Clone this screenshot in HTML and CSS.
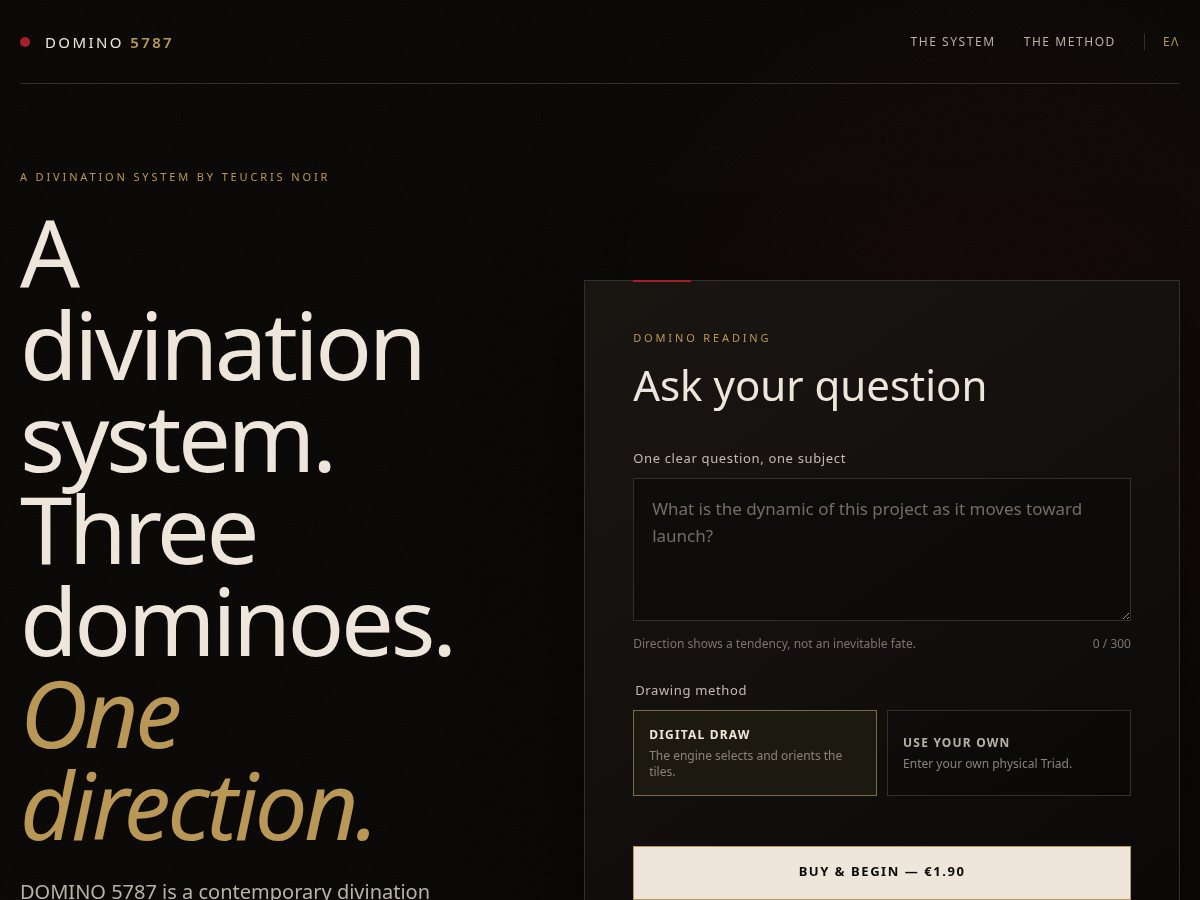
FILE: index.html
```html
<!DOCTYPE html>
<html lang="en">
<head>
  <meta charset="UTF-8" />
  <meta name="viewport" content="width=device-width, initial-scale=1.0" />
  <title>DOMINO 5787</title>
  <link rel="stylesheet" href="styles.css">
</head>
<body>
  <div class="page">
    <header class="site-header">
      <a class="brand" href="#top">
        <span class="brand-dot"></span>
        <span>DOMINO <strong>5787</strong></span>
      </a>
      <nav class="site-nav">
        <a href="#system">The System</a>
        <a href="#method">The Method</a>
        <a class="lang" href="#el" lang="el">ΕΛ</a>
      </nav>
    </header>

    <main class="hero" id="top">
      <section class="intro">
        <p class="eyebrow">A divination system by Teucris Noir</p>
        <h1>A divination system. Three dominoes. <em>One direction.</em></h1>
        <p class="lead">DOMINO 5787 is a contemporary divination</p>
      </section>

      <form class="card" id="readingForm">
        <p class="eyebrow">Domino reading</p>
        <h2>Ask your question</h2>

        <label class="field-label" for="question">One clear question, one subject</label>
        <textarea id="question" maxlength="300" placeholder="What is the dynamic of this project as it moves toward launch?"></textarea>
        <div class="field-meta">
          <span>Direction shows a tendency, not an inevitable fate.</span>
          <span id="counter">0 / 300</span>
        </div>

        <fieldset class="methods">
          <legend class="field-label">Drawing method</legend>
          <div class="method-grid">
            <button type="button" class="method" aria-pressed="true">
              <strong>Digital draw</strong>
              <span>The engine selects and orients the tiles.</span>
            </button>
            <button type="button" class="method" aria-pressed="false">
              <strong>Use your own</strong>
              <span>Enter your own physical Triad.</span>
            </button>
          </div>
        </fieldset>

        <button type="submit" class="buy">Buy &amp; begin — €1.90</button>
      </form>
    </main>
  </div>

  <script>
    const question = document.getElementById('question');
    const counter = document.getElementById('counter');
    const methods = document.querySelectorAll('.method');

    question.oninput = () => {
      counter.textContent = `${question.value.length} / 300`;
    };

    methods.forEach((button) => {
      button.onclick = () => {
        methods.forEach((m) => m.setAttribute('aria-pressed', m === button));
      };
    });

    document.getElementById('readingForm').onsubmit = (e) => e.preventDefault();
  </script>
</body>
</html>
```

FILE: styles.css
```css
:root {
  --ink: #080604;
  --paper: #eee6da;
  --muted: #b9b1a6;
  --dim: #8a837a;
  --gold: #b99857;
  --red: #a51e2d;
  --line: #32302e;
}
* {
  box-sizing: border-box;
}
body {
  margin: 0;
  min-height: 100vh;
  font-family: "Noto Sans", sans-serif;
  color: var(--paper);
  background:
    radial-gradient(circle at 83% 36%, rgba(120, 12, 28, 0.12), transparent 400px),
    var(--ink);
}
/* film grain over the background */
body::before {
  content: "";
  position: fixed;
  inset: 0;
  z-index: -1;
  opacity: 0.05;
  background: url("data:image/svg+xml,%3Csvg xmlns='http://www.w3.org/2000/svg' width='180' height='180'%3E%3Cfilter id='n'%3E%3CfeTurbulence type='fractalNoise' baseFrequency='.8' numOctaves='3' stitchTiles='stitch'/%3E%3CfeColorMatrix type='saturate' values='0'/%3E%3C/filter%3E%3Crect width='180' height='180' filter='url(%23n)'/%3E%3C/svg%3E");
}
h1, h2, p {
  margin: 0;
  font-weight: 400;
}
a {
  color: inherit;
  text-decoration: none;
}
button, textarea {
  font-family: inherit;
}
.page {
  max-width: 1280px;
  margin: 0 auto;
  padding: 0 20px;
}
.site-header {
  display: flex;
  align-items: center;
  justify-content: space-between;
  height: 84px;
  border-bottom: 1px solid var(--line);
}
.brand {
  display: flex;
  align-items: center;
  gap: 15px;
  font-size: 15px;
  line-height: 20px;
  letter-spacing: 0.16em;
}
.brand strong {
  color: var(--gold);
  font-weight: 600;
}
.brand-dot {
  width: 10px;
  height: 10px;
  border-radius: 50%;
  background: var(--red);
}
.site-nav {
  display: flex;
  align-items: center;
  gap: 28px;
  font-size: 12px;
  line-height: 17px;
  letter-spacing: 0.13em;
  text-transform: uppercase;
  color: var(--muted);
}
.lang {
  padding-left: 18px;
  border-left: 1px solid var(--line);
  color: var(--gold);
}
.hero {
  display: grid;
  grid-template-columns: 11fr 14fr;
  align-items: start;
  gap: 96px;
  padding: 84px 0 96px;
}
.eyebrow {
  font-size: 11px;
  line-height: 18px;
  letter-spacing: 0.26em;
  text-transform: uppercase;
  color: var(--gold);
}
h1 {
  margin-top: 20px;
  font-size: 94px;
  line-height: 92px;
  letter-spacing: -0.037em;
}
h1 em {
  color: var(--gold);
}
.lead {
  margin-top: 26px;
  font-size: 20px;
  line-height: 32px;
  color: var(--muted);
}
.card {
  position: relative;
  margin-top: 112px;
  padding: 48px;
  border: 1px solid var(--line);
  background: linear-gradient(145deg, #191612, #120f0e 50%, #0a0908);
  box-shadow: 0 30px 80px rgba(0, 0, 0, 0.5);
}
.card::before {
  content: "";
  position: absolute;
  top: -1px;
  left: 48px;
  width: 58px;
  height: 2px;
  background: var(--red);
}
h2 {
  margin: 10px 0 35px;
  font-size: 42px;
  line-height: 56px;
}
.field-label {
  display: block;
  font-size: 13px;
  line-height: 20px;
  letter-spacing: 0.05em;
  color: #c3bbb0;
}
textarea {
  display: block;
  width: 100%;
  height: 143px;
  margin-top: 10px;
  padding: 16px 18px;
  border: 1px solid var(--line);
  border-radius: 0;
  background: rgba(8, 7, 6, 0.5);
  color: var(--paper);
  font-size: 17px;
  line-height: 27px;
  resize: vertical;
}
textarea::placeholder {
  color: #746d65;
}
.field-meta {
  display: flex;
  justify-content: space-between;
  margin-top: 14px;
  font-size: 12px;
  line-height: 18px;
  color: #7c756d;
}
.methods {
  margin: 27px 0 0;
  padding: 0;
  border: 0;
}
.method-grid {
  display: grid;
  grid-template-columns: 1fr 1fr;
  gap: 10px;
  margin-top: 10px;
}
.method {
  min-height: 86px;
  padding: 14px 15px;
  border: 1px solid var(--line);
  background: rgba(8, 7, 6, 0.3);
  color: var(--muted);
  text-align: left;
}
.method strong {
  display: block;
  font-size: 12px;
  line-height: 18px;
  letter-spacing: 0.1em;
  text-transform: uppercase;
}
.method span {
  display: block;
  margin-top: 4px;
  font-size: 12px;
  line-height: 16px;
  color: var(--dim);
}
.method[aria-pressed="true"] {
  border-color: #7f6b42;
  background: #1c1911;
  color: var(--paper);
}
.buy {
  width: 100%;
  height: 54px;
  margin-top: 50px;
  padding: 0 0 4px;
  border: 1px solid var(--gold);
  background: var(--paper);
  color: #0a0908;
  font-size: 13px;
  font-weight: 700;
  letter-spacing: 0.12em;
  text-transform: uppercase;
}
@media (max-width: 900px) {
  .hero {
    grid-template-columns: 1fr;
    gap: 48px;
  }
  .card {
    margin-top: 0;
    padding: 32px;
  }
  h1 {
    font-size: 64px;
    line-height: 64px;
  }
}
```
